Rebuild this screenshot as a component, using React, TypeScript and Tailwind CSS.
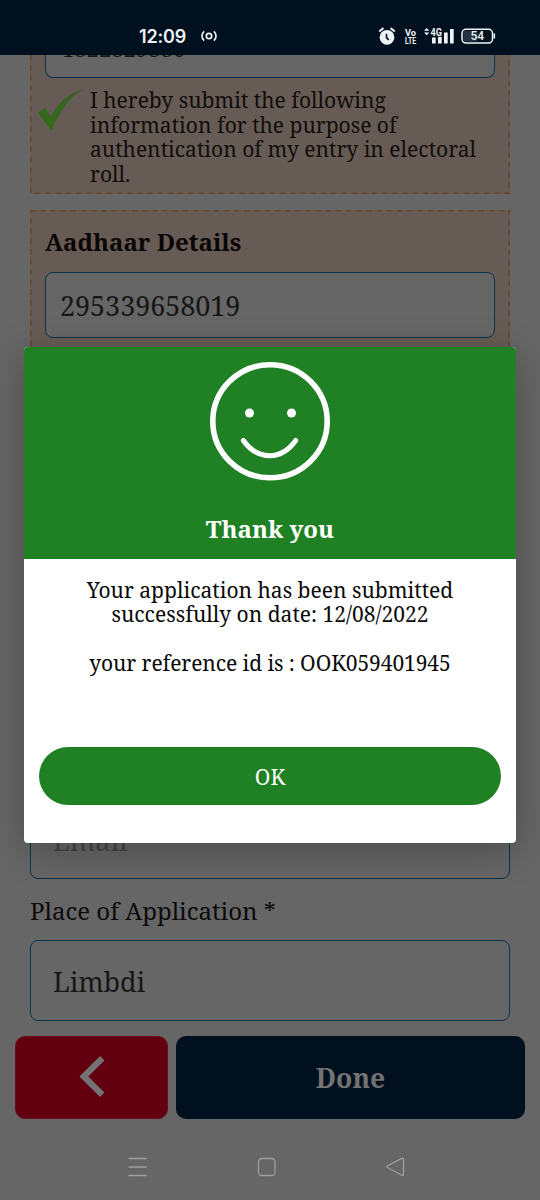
import React from "react";

function StatusBar() {
  return (
    <header className="flex h-[55px] shrink-0 items-end bg-[#00101e] pb-[8px] text-[#edf3f6]">
      <div className="ml-[139px] flex h-5 w-[80px] items-center gap-[15px]">
        <span className="whitespace-nowrap font-['Inter',sans-serif] text-[18px] font-semibold leading-5 tracking-[-0.2px]">
          12:09
        </span>
        <svg className="-mt-[2px] h-4 w-4 shrink-0" viewBox="0 0 16 16" fill="none" stroke="currentColor" strokeWidth="1.7">
          <circle cx="8" cy="8" r="2.7" />
          <path d="M3.200 3.300C.2 5.800.2 10.200 3.200 12.700M12.800 3.300c3 2.500 3 6.900 0 9.400" />
        </svg>
      </div>
      <svg className="ml-[159px] h-5 w-[120px]" viewBox="378 27 120 20" fill="none">
        <circle cx="387" cy="37.300" r="7.400" fill="currentColor" />
        <path d="M379.800 31l3-2.400M394.200 31l-3-2.400" stroke="currentColor" strokeWidth="2" strokeLinecap="round" />
        <path d="M386.500 33.800v3.800l2.300 2.300" stroke="#00101e" strokeWidth="1.600" />
        <g fill="currentColor" fontFamily="Roboto, sans-serif" fontWeight="700">
          <text x="405" y="35.700" fontSize="9.500" textLength="11" lengthAdjust="spacingAndGlyphs">Vo</text>
          <text x="405" y="43.500" fontSize="9.500" textLength="11" lengthAdjust="spacingAndGlyphs">LTE</text>
          <text x="430.500" y="35.500" fontSize="11" textLength="11.500" lengthAdjust="spacingAndGlyphs">4G</text>
        </g>
        <path
          d="M424 30.700l2.700-2.700 2.700 2.700zM424 32.500l2.700 2.700 2.700-2.700zM432 37.500h3.700v6H432zM438 36.800h3.700v6.700H438zM444 32.500h3.700v11H444zM450 29h3.700v14.500H450z"
          fill="currentColor"
        />
        <rect x="462" y="29.300" width="30.500" height="13.800" rx="4" stroke="currentColor" strokeWidth="1.500" />
        <path d="M464.500 31h13v10.500h-13q-1.200 0-1.200-1.200v-8q0-1.300 1.200-1.300z" fill="#26333e" />
        <path d="M494.300 33.500v5" stroke="currentColor" strokeWidth="1.600" />
        <text x="470.500" y="40.400" fill="currentColor" fontSize="12" fontFamily="Roboto, sans-serif" fontWeight="500">
          54
        </text>
      </svg>
    </header>
  );
}

function DashedFrame() {
  return (
    <svg className="pointer-events-none absolute inset-0 h-full w-full" fill="none" stroke="#664526" strokeWidth="3" strokeDasharray="5.200 5">
      <rect width="100%" height="100%" />
    </svg>
  );
}

function Declaration() {
  return (
    <section className="relative mx-[30px] h-[139px] shrink-0 overflow-hidden bg-[#665c55] px-[15px]">
      <svg className="pointer-events-none absolute left-0 top-0 h-[139px] w-[480px]" fill="none" stroke="#664526" strokeWidth="1.500" strokeDasharray="5.200 5">
        <path d="M.75 0V138.250H479.250V0" />
      </svg>
      <div className="h-[23px] overflow-hidden rounded-b-lg border border-t-0 border-[#0c334b] bg-[#666] pl-[16px]">
        <div className="-mt-[22.500px] text-[22px] leading-[30px] text-[#171717]">1822829886</div>
      </div>
      <div className="flex pt-[10px]">
        <svg className="-ml-[8px] h-[44px] w-[48px] shrink-0" viewBox="37 87 48 44">
          <defs>
            <linearGradient id="tick" x1="0" y1="1" x2="1" y2="0">
              <stop offset="0.200" stopColor="#326b1c" />
              <stop offset="0.600" stopColor="#37651f" />
              <stop offset="1" stopColor="#445531" />
            </linearGradient>
          </defs>
          <path d="M37.800 111.500l7.400-4.600 5.600 8.600C58 102 69 91.500 83 88.300 70 96 59.500 110 51.700 129.800z" fill="url(#tick)" />
        </svg>
        <p className="ml-[5px] whitespace-nowrap text-[21px] leading-[24.500px] text-[#120d0a]">
          I hereby submit the following
          <br />
          information for the purpose of
          <br />
          authentication of my entry in electoral
          <br />
          roll.
        </p>
      </div>
    </section>
  );
}

function AadhaarDetails() {
  return (
    <section className="relative mx-[30px] mt-4 h-[200px] shrink-0 overflow-hidden bg-[#665c55] px-[15px] pt-[16px]">
      <DashedFrame />
      <h2 className="h-[34px] whitespace-nowrap text-[24px] font-bold leading-[32px] text-[#0b0504]">Aadhaar Details</h2>
      <div className="mt-[12px] flex h-[66px] items-center rounded-lg border-[1.500px] border-[#0c334b] bg-[#666] pl-[14px] text-[27px] tracking-[-0.060px] text-[#171717]">
        <span className="pt-[3px]">295339658019</span>
      </div>
    </section>
  );
}

function ContactFields() {
  return (
    <section className="mx-[30px] mt-auto shrink-0">
      <div className="flex h-[82px] items-center rounded-lg border-[1.500px] border-[#0c334b] pl-[22px] text-[27px] text-[#444]">
        <span className="pt-1.5">Email</span>
      </div>
      <div className="mt-[14px] h-[36px] whitespace-nowrap text-[24px] leading-[36px] text-[#0b0b0b]">Place of Application *</div>
      <div className="mt-[11px] flex h-[81px] items-center rounded-lg border-[1.500px] border-[#0c334b] pl-[22px] text-[27px] tracking-[-0.150px] text-[#171717]">
        <span className="pt-[3px]">Limbdi</span>
      </div>
    </section>
  );
}

function ActionBar() {
  return (
    <div className="mt-[15px] flex h-[83px] shrink-0 gap-2 px-[15px]">
      <button className="flex w-[153px] items-center justify-center rounded-[10px] border-[1.500px] border-[#690d20] bg-[#620010]" aria-label="Back">
        <svg className="h-11 w-7" viewBox="0 0 28 44" fill="none" stroke="#737373" strokeWidth="6.200">
          <path d="M24.300 2.300L5.800 20.500 24.300 38.700" />
        </svg>
      </button>
      <button className="flex flex-1 items-center justify-center rounded-[10px] bg-[#00101e] text-[26.500px] font-bold text-[#737373]">
        <span className="pt-0.5">Done</span>
      </button>
    </div>
  );
}

function NavigationBar() {
  return (
    <nav className="flex h-[81px] shrink-0 items-center pl-[128px] pt-[15px]">
      <svg className="h-5 w-[278px]" viewBox="128 1157 278 20" fill="none" stroke="#a0a0a0" strokeWidth="1.300">
        <path d="M128.500 1158.500h18M128.500 1167h18M128.500 1175.500h18" />
        <rect x="258.500" y="1158.500" width="16.500" height="17" rx="3.500" />
        <path d="M387.800 1165.800l14-7.400q1.700-.8 1.700 1v14.800q0 1.800-1.700 1l-14-7.400q-1.800-1 0-2z" />
      </svg>
    </nav>
  );
}

function ThankYouDialog() {
  return (
    <div role="dialog" className="absolute left-[24px] top-[347px] flex h-[496px] w-[492px] flex-col overflow-hidden rounded-[4px] bg-white shadow-[0_8px_36px_rgba(0,0,0,0.26)]">
      <div className="flex h-[212px] shrink-0 flex-col items-center bg-[#208024] pt-[14px] text-white">
        <svg className="h-[120px] w-[120px]" viewBox="0 0 120 120" fill="none" stroke="white">
          <ellipse cx="60" cy="60.200" rx="57.200" ry="56.500" strokeWidth="5.600" />
          <circle cx="39.500" cy="52" r="4.500" fill="white" stroke="none" />
          <circle cx="81.500" cy="52" r="4.500" fill="white" stroke="none" />
          <path d="M33.300 79.500Q44 94.500 59.500 94.800 75 94.500 85.700 79.500" strokeWidth="5" strokeLinecap="round" />
        </svg>
        <h1 className="mt-[31px] whitespace-nowrap text-[24px] font-bold leading-[34px]">Thank you</h1>
      </div>
      <div className="h-[188px] shrink-0 whitespace-nowrap pt-[18.500px] text-center text-[21px] leading-[24.500px] text-[#090909]">
        Your application has been submitted
        <br />
        successfully on date: 12/08/2022
        <br />
        <br />
        <span className="tracking-[-0.080px]">your reference id is : OOK059401945</span>
      </div>
      <button className="mx-[15px] flex h-[58px] items-center justify-center rounded-full bg-[#208024] text-[21px] text-white">
        <span className="pt-[3px]">OK</span>
      </button>
    </div>
  );
}

export default function App() {
  return (
    <main className="relative flex h-[1200px] w-[540px] flex-col overflow-hidden bg-[#666] font-['Noto_Serif','DejaVu_Serif_Condensed','DejaVu_Serif',serif]">
      <StatusBar />
      <Declaration />
      <AadhaarDetails />
      <ContactFields />
      <ActionBar />
      <NavigationBar />
      <ThankYouDialog />
    </main>
  );
}
